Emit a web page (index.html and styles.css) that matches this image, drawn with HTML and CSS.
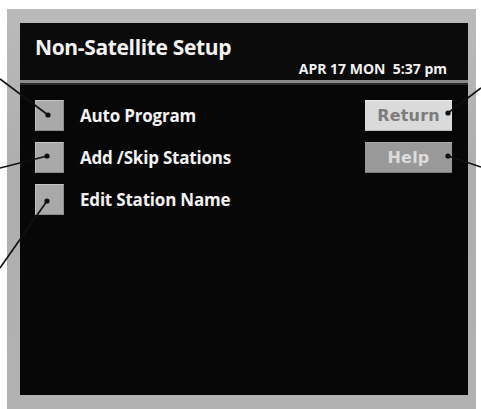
FILE: index.html
```html
<!DOCTYPE html>
<html lang="en">
<head>
<meta charset="utf-8">
<title>Non-Satellite Setup</title>
<link rel="stylesheet" href="styles.css">
</head>
<body>
<div class="stage">
  <div class="bezel">
    <div class="screen">
      <header class="screen-head">
        <h1 class="title">Non-Satellite Setup</h1>
        <div class="clock">APR 17 MON&nbsp; 5:37 pm</div>
      </header>
      <div class="rule"></div>
      <main class="screen-body">
        <ul class="menu">
          <li class="menu-item"><span class="key"></span><span class="label">Auto Program</span></li>
          <li class="menu-item"><span class="key"></span><span class="label">Add /Skip Stations</span></li>
          <li class="menu-item"><span class="key"></span><span class="label">Edit Station Name</span></li>
        </ul>
        <div class="actions">
          <button class="btn btn-return">Return</button>
          <button class="btn btn-help">Help</button>
        </div>
      </main>
    </div>
  </div>

  <!-- callout leaders pointing at the on-screen keys -->
  <svg class="leaders" width="481" height="409" viewBox="0 0 481 409">
    <g stroke="#111" stroke-width="1.6" fill="none">
      <line x1="0" y1="79" x2="48" y2="115"/>
      <line x1="0" y1="168" x2="47" y2="156"/>
      <line x1="0" y1="268" x2="47" y2="201"/>
      <line x1="481" y1="88" x2="448" y2="113"/>
      <line x1="481" y1="167" x2="448" y2="156"/>
    </g>
    <g fill="#111">
      <circle cx="48" cy="115" r="2.6"/>
      <circle cx="47" cy="156" r="2.6"/>
      <circle cx="47" cy="201" r="2.6"/>
      <circle cx="448" cy="113" r="2.6"/>
      <circle cx="448" cy="156" r="2.6"/>
    </g>
  </svg>
</div>
</body>
</html>
```
FILE: styles.css
```css
* { box-sizing: border-box; }

html, body {
  margin: 0;
  padding: 0;
  background: #fff;
}

.stage {
  position: relative;
  width: 481px;
  height: 409px;
  overflow: hidden;
  padding: 9px 5px 0 7px;
}

/* grey monitor bezel */
.bezel {
  width: 469px;
  height: 400px;
  padding: 14px 8px 14px 13px;
  background: #b0b0b0;
  background-image: linear-gradient(180deg, #bababa 0, #aeaeae 40%, #b2b2b2 100%);
}

.screen {
  width: 448px;
  height: 372px;
  background: #070707;
  display: flex;
  flex-direction: column;
  font-family: "Open Sans", "DejaVu Sans", sans-serif;
  color: #f2f2f2;
}

.screen-head {
  height: 57px;
  display: flex;
  justify-content: space-between;
  align-items: flex-start;
  padding: 0 21px 0 15px;
  background: #0b0b0b;
}

.title {
  margin: 11px 0 0;
  font-size: 21px;
  font-weight: 700;
  letter-spacing: -0.35px;
  line-height: 26px;
}

.clock {
  margin-top: 37px;
  font-size: 14px;
  font-weight: 700;
  letter-spacing: 0;
  line-height: 17px;
}

.rule {
  height: 5px;
  border-top: 3px solid #8a8a8a;
  background: #2a2a2a;
}

.screen-body {
  flex: 1;
  display: flex;
  justify-content: space-between;
  padding: 15px 16px 0 15px;
}

.menu {
  list-style: none;
  margin: 0;
  padding: 0;
  display: flex;
  flex-direction: column;
  gap: 11px;
}

.menu-item {
  display: flex;
  align-items: center;
  gap: 16px;
  height: 31px;
}

.key {
  width: 29px;
  height: 31px;
  background: #a9a9a9;
  border-top: 1px solid #c4c4c4;
  border-left: 1px solid #bdbdbd;
  border-right: 1px solid #8e8e8e;
  border-bottom: 1px solid #8a8a8a;
}

.label {
  font-size: 17px;
  font-weight: 700;
  letter-spacing: -0.2px;
}

.actions {
  display: flex;
  flex-direction: column;
  gap: 11px;
}

.btn {
  width: 87px;
  height: 31px;
  padding: 0;
  border: 0;
  font-family: "DejaVu Sans", sans-serif;
  font-size: 16px;
  font-weight: 700;
  letter-spacing: 0.2px;
}

.btn-return {
  background: #dadada;
  color: #7c7c7c;
  border-top: 1px solid #ececec;
  border-bottom: 1px solid #b8b8b8;
}

.btn-help {
  background: #999;
  color: #dcdcdc;
  border-top: 1px solid #aaa;
  border-bottom: 1px solid #7a7a7a;
}

.leaders {
  position: absolute;
  left: 0;
  top: 0;
  pointer-events: none;
}
```
